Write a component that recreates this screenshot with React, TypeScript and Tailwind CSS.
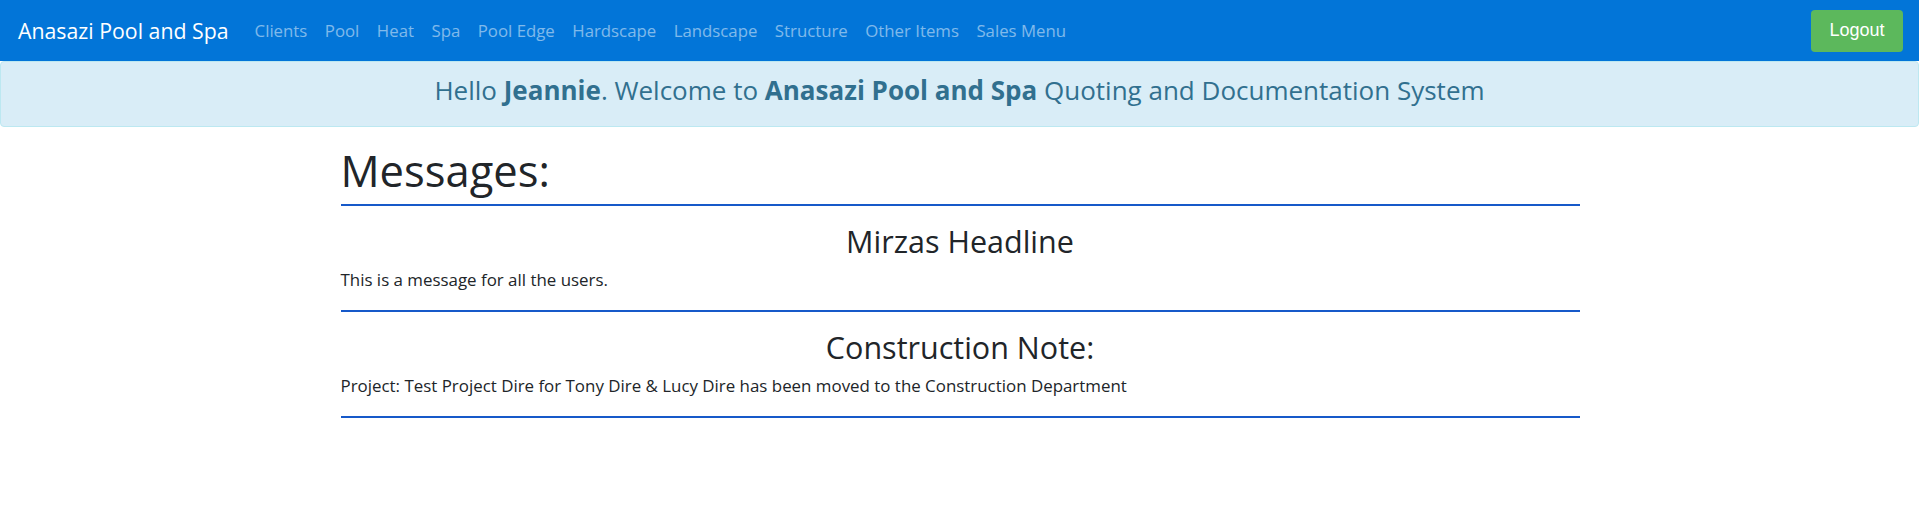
import React from "react";

const links = [
  "Clients",
  "Pool",
  "Heat",
  "Spa",
  "Pool Edge",
  "Hardscape",
  "Landscape",
  "Structure",
  "Other Items",
  "Sales Menu",
];

const messages = [
  { title: "Mirzas Headline", body: "This is a message for all the users." },
  {
    title: "Construction Note:",
    body: "Project: Test Project Dire for Tony Dire & Lucy Dire has been moved to the Construction Department",
  },
];

export default function App() {
  return (
    <div className="min-h-[528px] bg-white font-['Open_Sans',sans-serif] text-[#212529]">
      <nav className="flex h-[61px] items-center bg-[#0275d8] pl-[18px] pr-[16px]">
        <span className="text-[21.3px] leading-[24px] text-white">Anasazi Pool and Spa</span>
        <ul className="ml-[26px] flex gap-[17.5px]">
          {links.map((l) => (
            <li key={l} className="text-[16.8px] leading-[24px] text-white/50">
              {l}
            </li>
          ))}
        </ul>
        <button className="ml-auto h-[42px] w-[92px] rounded-[4px] bg-[#5cb85c] font-['Liberation_Sans',Arial,sans-serif] text-[18px] text-white">
          Logout
        </button>
      </nav>
      <div className="h-[66px] rounded-[4px] border border-[#bce8f1] bg-[#d9edf7] pt-[13px] text-center text-[26px] leading-[30px] text-[#31708f]">
        Hello <b className="font-bold">Jeannie</b>. Welcome to{" "}
        <b className="font-bold">Anasazi Pool and Spa</b> Quoting and Documentation System
      </div>
      <main className="mx-auto w-[1240px] pl-[1px]">
        <h1 className="mt-[17px] border-b-2 border-[#1659c9] pb-[6px] text-[43.5px] font-medium leading-[54px]">
          Messages:
        </h1>
        {messages.map((m) => (
          <section key={m.title} className="border-b-2 border-[#1659c9] pb-[18px] pt-[17px]">
            <h2 className="text-center text-[30.5px] font-medium leading-[36px]">{m.title}</h2>
            <p className="mt-[9px] text-[16.9px] leading-[24px]">{m.body}</p>
          </section>
        ))}
      </main>
    </div>
  );
}
